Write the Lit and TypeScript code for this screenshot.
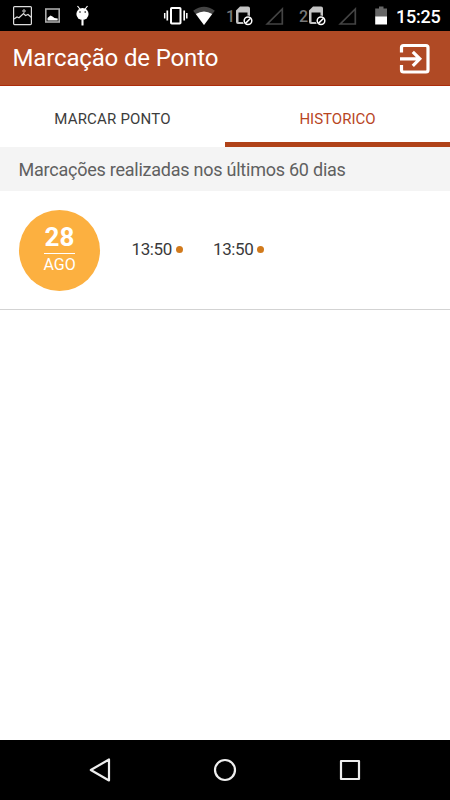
import { LitElement, html, css } from "lit";
import { customElement, state } from "lit/decorators.js";
import { classMap } from "lit/directives/class-map.js";

@customElement("status-bar")
class StatusBar extends LitElement {
  static styles = css`
    :host { display: flex; align-items: center; height: 31px; background: #000; color: #fff; }
    svg { display: block; flex: none; height: 31px; }
    .left { display: flex; flex: 1; padding-left: 12px; }
    .right { display: flex; align-items: center; }
    .clock { width: 54px; font-size: 18px; line-height: 29px; font-weight: 500; letter-spacing: -0.25px; padding-top: 2px; white-space: nowrap; }
    .sim { font: 500 16px Roboto, sans-serif; fill: #777; }
  `;

  private sim(label: string) {
    return html`<svg width="73" height="31" viewBox="0 0 73 31">
      <text class="sim" x="8" y="22">${label}</text>
      <path fill-rule="evenodd" d="M22 6.500h8q2 0 2 2V24H20q-2 0-2-2V10.500zM20.500 12.500V22H29.500V12.500z" fill="#c4c4c4"/>
      <circle cx="30" cy="20.800" r="5.300"/>
      <circle cx="30" cy="20.800" r="3.800" fill="#000" stroke="#fff" stroke-width="1.500"/>
      <path d="M27.400 23.400l5.200-5.200" stroke="#fff" stroke-width="1.500"/>
      <path d="M49.300 24H64.300V9z" fill="none" stroke="#444" stroke-width="1.700"/>
    </svg>`;
  }

  render() {
    return html`
      <div class="left">
        <svg width="32" height="31" viewBox="0 0 32 31" fill="none" stroke="#ddd">
          <rect x="1.600" y="6.600" width="17.800" height="18" rx="1" stroke-width="1.200"/>
          <path d="M2 19l3-2 2 .8 4.500-4.300 2 2 2.500-1 3.500 3" stroke-width="1.200"/>
          <circle cx="12" cy="11" r="1.200"/>
        </svg>
        <svg width="32" height="31" viewBox="0 0 32 31">
          <rect x="1.800" y="9" width="13.400" height="13" fill="none" stroke="#aaa" stroke-width="1.600"/>
          <path d="M3.500 20.500V18l3-2.500 2 1 2 1.500 3.200.5v2z" fill="#fff"/>
        </svg>
        <svg width="16" height="31" viewBox="0 0 16 31">
          <path d="M1.500 6l3.200 4M11.500 6l-3.200 4M6.500 19v6" stroke="#fff" stroke-width="1.200"/>
          <path d="M6.500 20v5.500" stroke="#fff" stroke-width="2"/>
          <ellipse cx="6.500" cy="14" rx="6.100" ry="6" fill="#fff"/>
          <circle cx="4" cy="12" r=".8"/><circle cx="9.200" cy="12" r=".8"/>
        </svg>
      </div>
      <div class="right">
        <svg width="29" height="31" viewBox="0 0 29 31">
          <rect x="8" y="8" width="9.500" height="15.500" rx=".8" fill="none" stroke="#fff" stroke-width="2"/>
          <path d="M4.300 10.500v10M21.200 10.500v10" stroke="#fff" stroke-width="1.700"/>
          <path d="M1.700 13v5.500M23.800 13v5.500" stroke="#fff" stroke-width="1.500"/>
        </svg>
        <svg width="26" height="31" viewBox="0 0 26 31">
          <path d="M1.200 10.700Q12 3 22.800 10.700L12 25z" fill="#444"/>
          <path d="M3.800 14Q12 9 20.200 14L12 25z" fill="#fff"/>
        </svg>
        ${this.sim("1")}${this.sim("2")}
        <svg width="32" height="31" viewBox="0 0 32 31">
          <path d="M15 6.500h4.500v2H23v8.500H11.200V8.500H15z" fill="#666"/>
          <path d="M11.200 16.500H23v8H11.200z" fill="#fff"/>
        </svg>
        <span class="clock">15:25</span>
      </div>`;
  }
}

@customElement("date-badge")
class DateBadge extends LitElement {
  static styles = css`
    :host { display: flex; flex-direction: column; align-items: center; box-sizing: border-box;
      width: 81px; height: 81px; padding-top: 12px; border-radius: 50%; background: #fcb040; color: #fff; }
    .day { font-size: 26px; line-height: 31px; font-weight: 700; }
    .month { width: 31px; border-top: 1px solid #fff; font-size: 16px; line-height: 22px; display: flex; justify-content: center; }
  `;
  render() {
    return html`<span class="day">28</span><span class="month">AGO</span>`;
  }
}

@customElement("app-root")
class AppRoot extends LitElement {
  static styles = css`
    :host { display: flex; flex-direction: column; width: 450px; height: 800px; background: #fff;
      font-family: Roboto, sans-serif; overflow: hidden; }
    .header { display: flex; align-items: center; justify-content: space-between; box-sizing: border-box;
      height: 55px; padding: 0 18px 0 12.500px; background: #b04a25; border-bottom: 1px solid #ad2c0b; color: #fff; }
    .title { font-size: 24px; line-height: 55px; font-weight: 400; margin: 0; letter-spacing: -0.15px; }
    .header svg { position: relative; top: 1px; }
    .tabs { display: grid; grid-template-columns: 1fr 1fr; height: 61px; }
    .tab { display: flex; justify-content: center; box-sizing: border-box; padding-top: 10px; height: 61px; line-height: 46px;
      font-size: 15px; color: #3c3c3c; letter-spacing: 0.2px; border-bottom: 5px solid transparent; cursor: pointer; }
    .tab.active { color: #b8461f; letter-spacing: 0; border-bottom-color: #b04218; }
    .section { height: 44px; box-sizing: border-box; padding: 1px 0 0 18.500px; background: #f4f4f4; color: #606060; font-size: 18px; letter-spacing: -0.24px; line-height: 44px; }
    .entry { display: flex; align-items: center; box-sizing: border-box; height: 119px; padding-left: 19px; border-bottom: 1px solid #d3d3d3; }
    .times { display: flex; gap: 30px; margin: -2px 0 0 31.500px; }
    .time { display: flex; align-items: center; gap: 4px; width: 51.500px; font-size: 17px; letter-spacing: -0.4px; line-height: 20px; color: #3a3a3a; }
    .dot { flex: none; width: 7px; height: 7px; border-radius: 50%; background: #d17a1c; }
    .body { flex: 1; }
    .nav { height: 60px; display: flex; background: #000; }
  `;

  @state() private active = 1;

  render() {
    return html`
      <status-bar></status-bar>
      <header class="header">
        <h1 class="title">Marcação de Ponto</h1>
        <svg width="34" height="34" viewBox="0 0 34 34" fill="none" stroke="#fff" stroke-width="3.200">
          <path d="M3.500 10.500V5.500q0-2 2-2H28q2 0 2 2V28q0 2-2 2H5.500q-2 0-2-2v-5"/>
          <path d="M2 16.800h19M14.800 9.800l7 7-7 7"/>
        </svg>
      </header>
      <nav class="tabs">
        ${["MARCAR PONTO", "HISTORICO"].map((t, i) => html`
          <div class=${classMap({ tab: true, active: i === this.active })} @click=${() => (this.active = i)}>${t}</div>`)}
      </nav>
      <div class="section">Marcações realizadas nos últimos 60 dias</div>
      <div class="entry">
        <date-badge></date-badge>
        <div class="times">
          ${["13:50", "13:50"].map((t) => html`<div class="time"><span>${t}</span><i class="dot"></i></div>`)}
        </div>
      </div>
      <div class="body"></div>
      <footer class="nav">
        <svg width="450" height="60" viewBox="0 0 450 60" fill="none" stroke="#eee" stroke-width="2.200" stroke-linejoin="round">
          <path d="M90.800 30L109 19.500V40.500z"/>
          <circle cx="225" cy="30" r="10"/>
          <rect x="341" y="21" width="18" height="18"/>
        </svg>
      </footer>`;
  }
}
